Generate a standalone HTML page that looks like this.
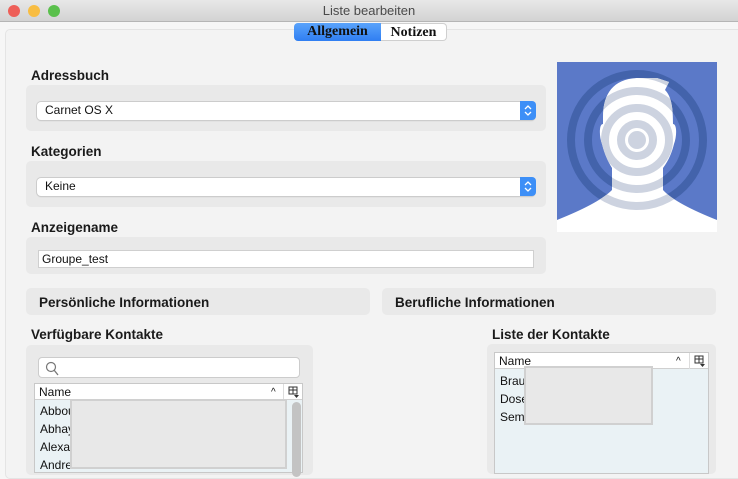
<!DOCTYPE html>
<html><head><meta charset="utf-8"><style>
*{box-sizing:border-box;margin:0;padding:0}
body{width:738px;height:471px;overflow:hidden;background:#f6f6f6;font-family:"Liberation Sans",sans-serif;position:relative;font-size:12px;color:#111}
.a{position:absolute}
.tb{left:0;top:0;width:738px;height:22px;background:linear-gradient(#e8e8e8,#d3d3d3);border-bottom:1px solid #b5b5b5;text-align:center;font-size:13px;line-height:22px;color:#4a4a4a}
.dot{width:12px;height:12px;border-radius:50%;top:5px}
.panel{left:5px;top:29px;width:740px;height:450px;background:#f3f3f3;border:1px solid #e4e4e4;border-radius:5px}
.lbl{font-weight:bold;font-size:13.5px;color:#1a1a1a}
.box{background:#e9e9e9;border-radius:5px}
.sel{background:#fff;border-radius:4px;box-shadow:0 0 0 1px #ccc, 0 1px 1px #bbb;font-size:12px;line-height:17px;padding-left:8px}
.arr{position:absolute;right:-1px;top:-1px;width:16px;height:19px;background:#3d8ff7;border-radius:0 4px 4px 0}
.inp{background:#fff;border:1px solid #cfcfcf;font-size:12px;padding-left:3px;line-height:16px}
.tab{top:23px;height:18px;font-family:"Liberation Serif",serif;font-weight:bold;font-size:14px;line-height:17px;text-align:center}
.row{font-size:12px;left:5px}
</style></head><body>
<div class="a tb">Liste bearbeiten</div>
<div class="a dot" style="left:8px;background:#ee5f58"></div>
<div class="a dot" style="left:28px;background:#f8bd42"></div>
<div class="a dot" style="left:48px;background:#5ac04c"></div>
<div class="a panel"></div>
<div class="a tab" style="left:294px;width:87px;background:linear-gradient(#5aa3fb,#2f7ef2);border-radius:4px 0 0 4px;color:#111">Allgemein</div>
<div class="a tab" style="left:381px;width:66px;background:#fff;border:1px solid #cfcfcf;border-left:none;border-radius:0 4px 4px 0">Notizen</div>

<div class="a lbl" style="left:31px;top:68px">Adressbuch</div>
<div class="a box" style="left:26px;top:85px;width:520px;height:46px"></div>
<div class="a sel" style="left:37px;top:102px;width:498px;height:18px">Carnet OS X<div class="arr"><svg width="16" height="19"><path d="M5 8l3-3 3 3M5 11l3 3 3-3" stroke="#fff" stroke-width="1.3" fill="none"/></svg></div></div>

<div class="a lbl" style="left:31px;top:144px">Kategorien</div>
<div class="a box" style="left:26px;top:161px;width:520px;height:46px"></div>
<div class="a sel" style="left:37px;top:178px;width:498px;height:18px">Keine<div class="arr"><svg width="16" height="19"><path d="M5 8l3-3 3 3M5 11l3 3 3-3" stroke="#fff" stroke-width="1.3" fill="none"/></svg></div></div>

<div class="a lbl" style="left:31px;top:220px">Anzeigename</div>
<div class="a box" style="left:26px;top:237px;width:520px;height:37px"></div>
<div class="a inp" style="left:38px;top:250px;width:496px;height:18px">Groupe_test</div>

<svg class="a" style="left:557px;top:62px" width="160" height="170" viewBox="0 0 160 170">
<defs><clipPath id="h"><path d="M46 55 C46 30 58 16 82 16 L100 16 L112 20 L108 28 C115 35 116 48 116 62 C120 62 120 74 117 82 C115 90 112 98 106 106 L106 128 C115 138 135 148 160 158 L160 170 L0 170 L0 158 C25 148 45 138 55 128 L55 106 C50 98 47 90 45 82 C42 74 42 62 46 62 Z"/></clipPath></defs>
<rect width="160" height="170" fill="#5b79c8"/>
<g fill="none" stroke="#4363ab" stroke-width="8"><circle cx="80" cy="78" r="66"/><circle cx="80" cy="78" r="49"/></g>
<g clip-path="url(#h)"><rect width="160" height="170" fill="#fff"/>
<g fill="none" stroke="#cdd3e0" stroke-width="8"><circle cx="80" cy="78" r="66"/><circle cx="80" cy="78" r="49"/><circle cx="80" cy="78" r="32"/><circle cx="80" cy="78" r="16"/></g>
<circle cx="80" cy="78" r="9" fill="#cdd3e0"/></g>
</svg>

<div class="a box" style="left:26px;top:288px;width:344px;height:27px"></div>
<div class="a lbl" style="left:39px;top:295px">Persönliche Informationen</div>
<div class="a box" style="left:382px;top:288px;width:334px;height:27px"></div>
<div class="a lbl" style="left:395px;top:295px">Berufliche Informationen</div>

<div class="a lbl" style="left:31px;top:327px">Verfügbare Kontakte</div>
<div class="a box" style="left:26px;top:345px;width:287px;height:130px"></div>
<div class="a" style="left:38px;top:357px;width:262px;height:21px;background:#fff;border:1px solid #ccc;border-radius:4px"><svg width="20" height="20" style="position:absolute;left:4px;top:1px"><circle cx="8" cy="8" r="4.5" stroke="#777" fill="none" stroke-width="1.2"/><path d="M11 11l4 5" stroke="#777" stroke-width="1.3"/></svg></div>
<div class="a" style="left:34px;top:383px;width:269px;height:90px;background:#eaf2f5;border:1px solid #c8c8c8">
<div class="a" style="left:0;top:0;width:267px;height:16px;background:#fff;border-bottom:1px solid #d0d0d0;font-size:12px;line-height:16px;padding-left:4px">Name<span style="position:absolute;left:236px;top:1px;font-size:10px">^</span><span style="position:absolute;left:248px;top:0;height:16px;border-left:1px solid #ddd"></span><svg style="position:absolute;left:253px;top:2px" width="12" height="12"><rect x="1" y="1" width="8" height="7" fill="none" stroke="#333"/><path d="M1 4h8M5 1v7" stroke="#333"/><path d="M6 9h5l-2.5 3z" fill="#333"/></svg></div>
<div class="a row" style="top:20px">Abbou</div><div class="a row" style="top:38px">Abhay</div><div class="a row" style="top:56px">Alexar</div><div class="a row" style="top:74px">Andre</div>
<div class="a" style="left:257px;top:18px;width:9px;height:75px;background:#c3c3c3;border-radius:5px"></div>
</div>
<div class="a" style="left:70px;top:399px;width:217px;height:70px;background:#e8e8e8;border:2px solid #d0d0d0"></div>

<div class="a lbl" style="left:492px;top:327px">Liste der Kontakte</div>
<div class="a box" style="left:487px;top:344px;width:229px;height:130px"></div>
<div class="a" style="left:494px;top:352px;width:215px;height:122px;background:#eaf2f5;border:1px solid #c8c8c8">
<div class="a" style="left:0;top:0;width:213px;height:16px;background:#fff;border-bottom:1px solid #d0d0d0;font-size:12px;line-height:16px;padding-left:4px">Name<span style="position:absolute;left:181px;top:1px;font-size:10px">^</span><span style="position:absolute;left:194px;top:0;height:16px;border-left:1px solid #ddd"></span><svg style="position:absolute;left:199px;top:2px" width="12" height="12"><rect x="1" y="1" width="8" height="7" fill="none" stroke="#333"/><path d="M1 4h8M5 1v7" stroke="#333"/><path d="M6 9h5l-2.5 3z" fill="#333"/></svg></div>
<div class="a row" style="top:21px">Brau</div><div class="a row" style="top:39px">Dose</div><div class="a row" style="top:57px">Sems</div>
</div>
<div class="a" style="left:524px;top:366px;width:129px;height:59px;background:#e8e8e8;border:2px solid #d0d0d0"></div>
</body></html>
